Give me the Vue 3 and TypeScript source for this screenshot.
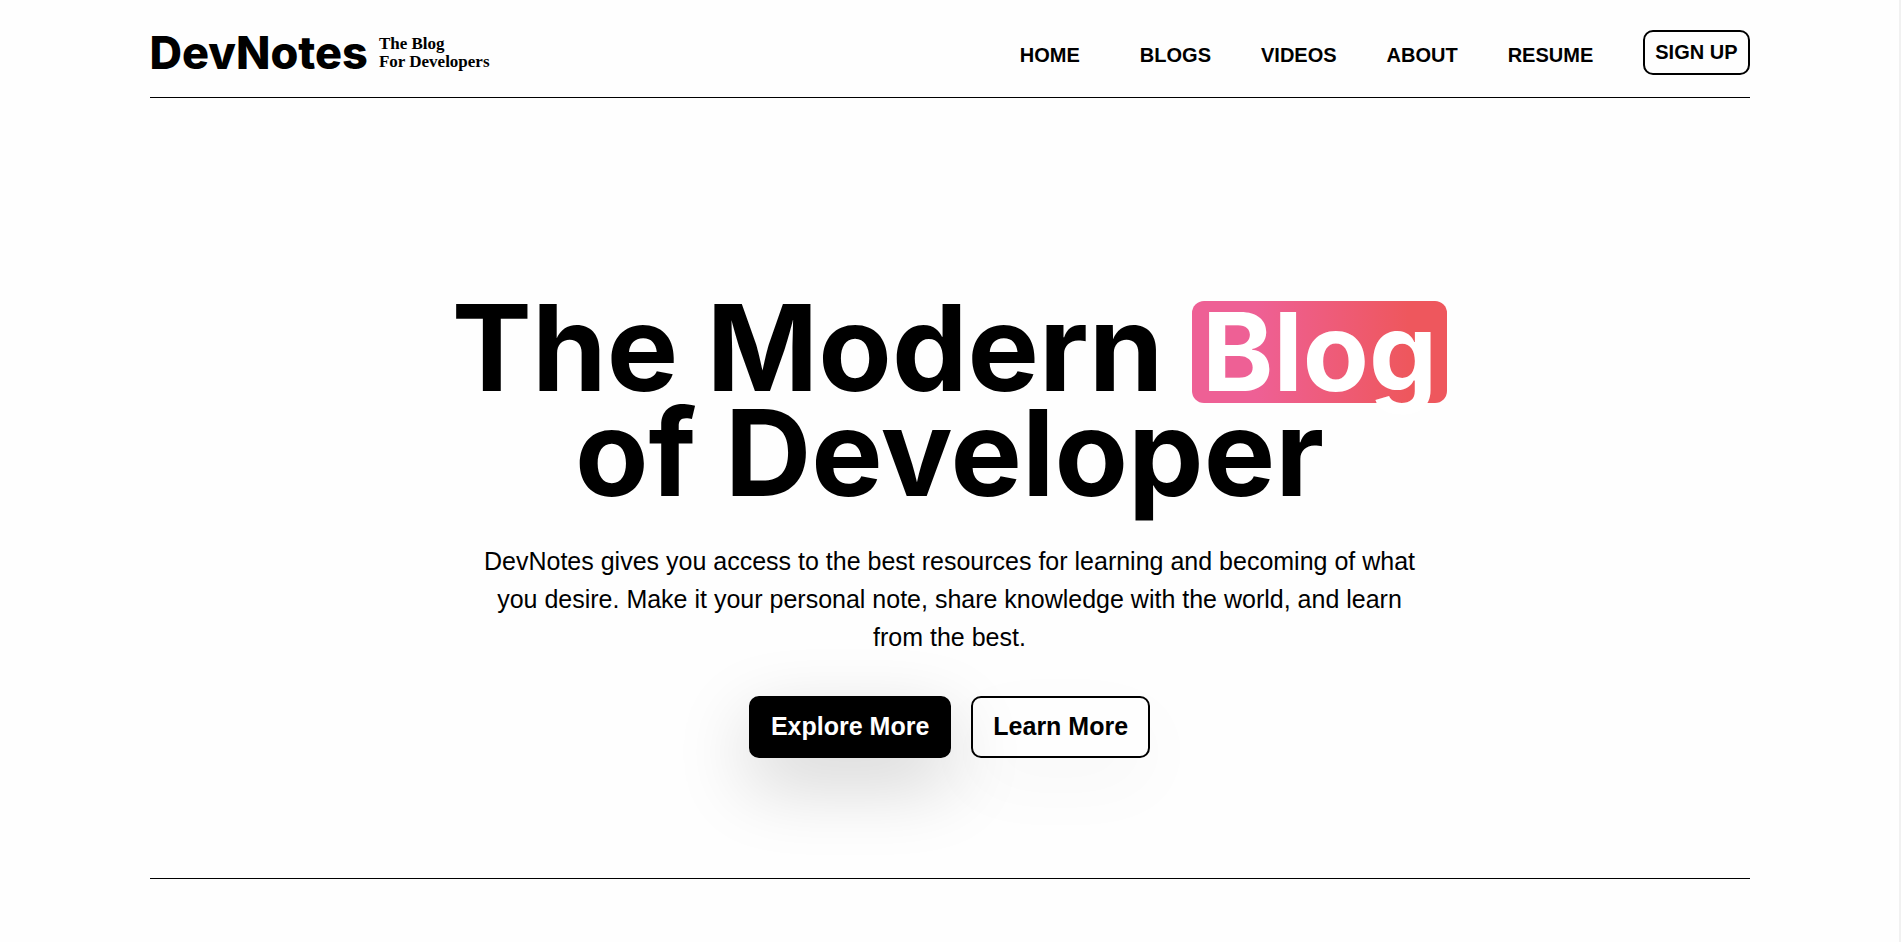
<script setup lang="ts">
const links: string[] = ['Home', 'Blogs', 'Videos', 'About', 'Resume']
</script>

<template>
  <div class="page">
    <header class="header">
      <a class="brand" href="#">
        <span class="brand-name">DevNotes</span>
        <span class="brand-tag">The Blog<br />For Developers</span>
      </a>
      <nav class="nav" aria-label="Main">
        <a v-for="link in links" :key="link" class="nav-link" href="#">{{ link }}</a>
        <button class="sign-up" type="button">SIGN UP</button>
      </nav>
    </header>
    <main class="hero">
      <h1 class="title">The Modern <span class="highlight">Blog</span><br />of Developer</h1>
      <p class="lead">
        DevNotes gives you access to the best resources for learning and becoming of what you
        desire. Make it your personal note, share knowledge with the world, and learn from the best.
      </p>
      <div class="actions">
        <button class="action primary" type="button">Explore More</button>
        <button class="action secondary" type="button">Learn More</button>
      </div>
    </main>
  </div>
</template>

<style>
body {
  background: #fefefe;
}
</style>

<style scoped>
.page {
  box-sizing: border-box;
  min-height: 100vh;
  border-right: 2px solid #f1f1f1;
  color: #000;
  font-family: 'Liberation Sans', Arial, sans-serif;
}

.header,
.hero {
  box-sizing: border-box;
  width: calc(100% - 48px);
  max-width: 1600px;
  margin: 0 auto;
  border-bottom: 1px solid #000;
}

.header {
  display: flex;
  align-items: center;
  justify-content: space-between;
  padding: 25px 0 16px;
}

.brand {
  display: flex;
  align-items: center;
  gap: 11px;
  color: inherit;
  text-decoration: none;
}

.brand-name {
  font-family: Inter, sans-serif;
  font-size: 45px;
  font-weight: 800;
  line-height: 56px;
}

.brand-tag {
  font-family: 'Liberation Serif', 'Times New Roman', serif;
  font-size: 17px;
  font-weight: 700;
  line-height: 18px;
}

.nav {
  display: flex;
  align-items: center;
  gap: 50px;
  padding-bottom: 1px;
}

.nav-link {
  padding-top: 5px;
  color: inherit;
  font-size: 20px;
  font-weight: 700;
  line-height: 24px;
  text-decoration: none;
  text-transform: uppercase;
}

.nav-link:first-child {
  margin-right: 10px;
}

.sign-up {
  padding: 10px;
  border: 2px solid #000;
  border-radius: 10px;
  background: transparent;
  color: inherit;
  font: 700 20px/21px 'Liberation Sans', Arial, sans-serif;
}

.hero {
  display: flex;
  flex-direction: column;
  align-items: center;
  padding: 197px 0 120px;
  text-align: center;
}

.title {
  margin: 0;
  font-family: Inter, sans-serif;
  font-size: 120px;
  font-weight: 700;
  line-height: 105px;
}

.highlight {
  display: inline-block;
  box-sizing: border-box;
  height: 102px;
  margin: -4px 0;
  padding: 0 10px;
  border-radius: 12px;
  background: linear-gradient(to right, #ee6095 25%, #ee575d 85%);
  color: #fff;
  font-size: 108px;
  line-height: 102px;
}

.lead {
  max-width: 960px;
  margin: 37px 0 0;
  font-size: 25px;
  line-height: 38px;
}

.actions {
  display: flex;
  gap: 20px;
  margin-top: 40px;
}

.action {
  padding: 14px 20px 16px;
  border: 2px solid #000;
  border-radius: 10px;
  font: 700 25px/28px 'Liberation Sans', Arial, sans-serif;
}

.primary {
  background: #000;
  box-shadow: 0 25px 75px rgba(0, 0, 0, 0.18);
  color: #fff;
}

.secondary {
  background: transparent;
  box-shadow: 0 25px 75px rgba(0, 0, 0, 0.03);
  color: #000;
}
</style>
